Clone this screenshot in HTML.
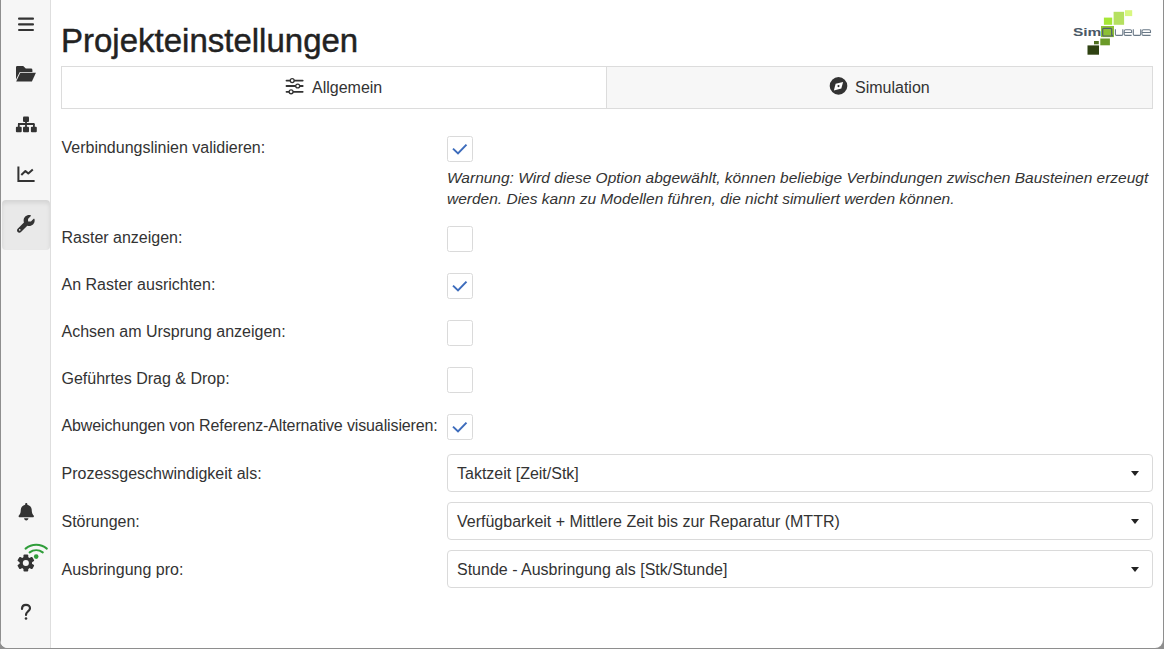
<!DOCTYPE html>
<html><head><meta charset="utf-8">
<style>
html,body{margin:0;padding:0;width:1164px;height:649px;overflow:hidden;background:#8e8e8e;font-family:"Liberation Sans",sans-serif;}
.abs{position:absolute;}
#win{position:absolute;left:0;top:0;width:1163px;height:648px;background:#fff;border-radius:0 0 8px 8px;overflow:hidden;}
#side{position:absolute;left:0;top:0;width:50px;height:648px;background:#f6f6f6;border-right:1px solid #dedede;}
#edge{position:absolute;left:0;top:0;width:1px;height:648px;background:#8e8e8e;}
.act{position:absolute;left:1.5px;top:200px;width:48.5px;height:49.5px;background:#e9e9e9;border-radius:4px;box-shadow:inset 0 3px 4px rgba(0,0,0,0.09);}
.t{position:absolute;white-space:nowrap;line-height:20px;}
.lbl{font-size:16px;color:#333;left:61.5px;}
.cb{position:absolute;left:447px;width:24px;height:24px;border:1px solid #dadada;border-radius:2.5px;background:#fff;}
.sel{position:absolute;left:447px;width:704px;height:36px;border:1px solid #dadada;border-radius:4px;background:#fff;}
.sel span{position:absolute;left:9px;top:9px;font-size:16px;color:#333;line-height:20px;white-space:nowrap;}
.caret{position:absolute;left:683px;top:16px;width:0;height:0;border-left:4.5px solid transparent;border-right:4.5px solid transparent;border-top:5px solid #222;}
</style></head><body>
<div id="win">
  <div id="side"><div class="act"></div></div>
  <div id="edge"></div>
  <svg class="abs" style="left:0;top:0" width="50" height="649" viewBox="0 0 50 649">
    <g fill="#333">
      <!-- hamburger -->
      <rect x="18" y="17.6" width="16" height="2.1" rx="1"/>
      <rect x="18" y="23.3" width="16" height="2.1" rx="1"/>
      <rect x="18" y="29" width="16" height="2.1" rx="1"/>
      <!-- folder open -->
      <path d="M16,67.3 Q16,66 17.3,66 H23.2 L25.8,68.6 H31 Q32.4,68.6 32.4,70 V71.9 H19.8 L16,79.5 Z"/>
      <path d="M20.3,72.8 H35.9 L31.9,81.6 H16.2 Z"/>
      <!-- sitemap -->
      <rect x="23" y="116.4" width="6" height="5.5" rx="1"/>
      <rect x="25.1" y="121" width="1.8" height="3"/>
      <rect x="18" y="123" width="16.5" height="2"/>
      <rect x="17.9" y="124" width="1.8" height="3"/>
      <rect x="33" y="124" width="1.8" height="3"/>
      <rect x="25.1" y="124" width="1.8" height="3"/>
      <rect x="15.9" y="126.7" width="5.8" height="5.5" rx="1"/>
      <rect x="23" y="126.7" width="6" height="5.5" rx="1"/>
      <rect x="30.9" y="126.7" width="5.9" height="5.5" rx="1"/>
      <!-- bell (FA5) -->
      <g transform="translate(18.6,503) scale(0.0342)">
        <path d="M224 512c35.32 0 63.97-28.65 63.97-64H160.03c0 35.35 28.65 64 63.97 64zm215.39-149.71c-19.32-20.76-55.470-51.99-55.47-154.29 0-77.7-54.48-139.9-127.94-155.16V32c0-17.67-14.32-32-31.98-32s-31.98 14.330-31.98 32v20.84C118.56 68.1 64.08 130.3 64.08 208c0 102.3-36.15 133.53-55.47 154.29-6 6.45-8.66 14.16-8.61 21.71.11 16.4 12.98 32 32.1 32h383.8c19.12 0 32-15.6 32.1-32 .05-7.55-2.61-15.27-8.61-21.71z"/>
      </g>
      <!-- wrench (FA6) -->
      <g transform="translate(17,215) scale(0.0345)">
        <path d="M352 320c88.4 0 160-71.6 160-160c0-15.3-2.2-30.1-6.2-44.2c-3.1-10.8-16.4-13.2-24.3-5.3l-76.8 76.8c-3 3-7.1 4.7-11.3 4.7H336c-8.8 0-16-7.2-16-16V118.6c0-4.2 1.7-8.3 4.7-11.3l76.8-76.8c7.9-7.9 5.4-21.2-5.3-24.3C382.1 2.2 367.3 0 352 0C263.6 0 192 71.6 192 160c0 19.1 3.4 37.5 9.5 54.5L19.9 396.1C7.2 408.8 0 426.1 0 444.1C0 481.6 30.4 512 67.9 512c18 0 35.3-7.2 48-19.9L297.5 310.5c17 6.2 35.4 9.5 54.5 9.5zM80 408a24 24 0 1 1 0 48 24 24 0 1 1 0-48z"/>
      </g>
    </g>
    <!-- chart line -->
    <g fill="none" stroke="#333" stroke-width="2">
      <path d="M18.4,166.5 V181 H34.6"/>
      <path d="M21.3,175 L25.4,171 L28.3,173.5 L32.8,169.6" stroke-linejoin="round"/>
    </g>
    <!-- gear -->
    <g id="gear" fill="#333">
      <circle cx="25.85" cy="563" r="6.3"/>
      <g transform="translate(25.85,563)">
        <rect x="-2.4" y="-8.6" width="4.8" height="4.5" rx="1"/>
        <rect x="-2.4" y="-8.6" width="4.8" height="4.5" rx="1" transform="rotate(60)"/>
        <rect x="-2.4" y="-8.6" width="4.8" height="4.5" rx="1" transform="rotate(120)"/>
        <rect x="-2.4" y="-8.6" width="4.8" height="4.5" rx="1" transform="rotate(180)"/>
        <rect x="-2.4" y="-8.6" width="4.8" height="4.5" rx="1" transform="rotate(240)"/>
        <rect x="-2.4" y="-8.6" width="4.8" height="4.5" rx="1" transform="rotate(300)"/>
      </g>
      <circle cx="25.85" cy="563" r="3.05" fill="#f6f6f6"/>
    </g>
    <g fill="none" stroke="#2f9d3a" stroke-width="2.1" stroke-linecap="round">
      <path d="M25.6,548.6 A16.5,16.5 0 0 1 46.8,548.6"/>
      <path d="M29.65,552.4 A10.9,10.9 0 0 1 42.75,552.4"/>
    </g>
    <circle cx="36.2" cy="556.6" r="2.3" fill="#2f9d3a"/>
    <!-- question -->
    <g fill="none" stroke="#333" stroke-width="2.2" stroke-linecap="round">
      <path d="M22,609 C22,606 23.8,604.8 26,604.8 C28.4,604.8 30,606.4 30,608.3 C30,610.3 28.5,611 27.4,612 C26.4,612.8 26,613.5 26,615"/>
    </g>
    <circle cx="26" cy="618.5" r="1.3" fill="#333"/>
  </svg>

  <!-- title -->
  <div class="t" style="left:61px;top:21px;font-size:33px;line-height:40px;color:#222;-webkit-text-stroke:0.45px #222;">Projekteinstellungen</div>
  <!-- logo placeholder -->
  <svg class="abs" style="left:1080px;top:5px" width="80" height="55" viewBox="1080 5 80 55">
    <rect x="1125" y="10.2" width="7.2" height="5.9" fill="#d8f780"/>
    <rect x="1113.6" y="11.8" width="10.5" height="13" fill="#b5e060"/>
    <rect x="1103.9" y="17.6" width="8.3" height="7.2" fill="#a6e636"/>
    <rect x="1101" y="26" width="13" height="11.1" fill="#8cc034"/>
    <rect x="1100.3" y="38.5" width="9.6" height="6.8" fill="#6a9a28"/>
    <rect x="1094" y="41" width="4.8" height="3.3" fill="#4d6e1e"/>
    <rect x="1087.5" y="45.4" width="11.5" height="9.3" fill="#2f4212"/>
    <path d="M1113,36 H1103.6 Q1102.7,36 1102.7,35 V29.3 Q1102.7,28.3 1103.6,28.3 H1110.6 Q1111.7,28.3 1111.7,29.3 V34.7 L1112.9,36" fill="none" stroke="#505e6b" stroke-width="1.2"/>
    <g fill="none" stroke="#6b7a88" stroke-width="1.1">
      <path d="M1115.4,29.3 V34.2 Q1115.4,35.4 1116.6,35.4 H1121.6 Q1122.8,35.4 1122.8,34.2 V29.3"/>
      <path d="M1133.3,29.3 V34.2 Q1133.3,35.4 1134.5,35.4 H1139.5 Q1140.7,35.4 1140.7,34.2 V29.3"/>
      <path d="M1131.6,35.4 H1125.6 Q1124.2,35.4 1124.2,34 V31 Q1124.2,29.8 1125.6,29.8 H1130.3 Q1131.6,29.8 1131.6,31 V32.5 H1124.2"/>
      <path d="M1150.6,35.4 H1143.4 Q1142,35.4 1142,34 V31 Q1142,29.8 1143.4,29.8 H1149.2 Q1150.5,29.8 1150.5,31 V32.5 H1142"/>
    </g>
  </svg>
  <div class="abs" style="left:1072.5px;top:25px;font-size:11.3px;line-height:14px;font-weight:bold;color:#4a5866;transform-origin:0 0;transform:scaleX(1.37);white-space:nowrap;">Sim</div>
  <!-- tabs -->
  <div class="abs" style="left:61px;top:66px;width:1090px;height:41px;border:1px solid #dcdcdc;background:#fff;"></div>
  <div class="abs" style="left:606px;top:66px;width:545px;height:41px;border:1px solid #dcdcdc;background:#f7f7f7;"></div>
  <svg class="abs" style="left:280px;top:74px" width="30" height="24" viewBox="280 74 30 24">
    <g stroke="#333" stroke-width="1.8" fill="none" stroke-linecap="round">
      <path d="M286.5,80.6 H302.7 M286.5,86.0 H302.7 M286.5,91.8 H302.7"/>
    </g>
    <g stroke="#333" stroke-width="1.3" fill="#fff">
      <circle cx="292.2" cy="80.6" r="1.95"/>
      <circle cx="297.7" cy="86.0" r="1.95"/>
      <circle cx="291.1" cy="91.8" r="1.95"/>
    </g>
  </svg>
  <div class="t" style="left:312px;top:78px;font-size:16px;color:#333;">Allgemein</div>
  <svg class="abs" style="left:826px;top:74px" width="24" height="24" viewBox="826 74 24 24">
    <circle cx="838.5" cy="85.9" r="8.8" fill="#333"/>
    <path d="M843.1,81.9 L841.3,88.6 L833.9,90.6 L835.6,83.8 Z" fill="#fff"/>
    <circle cx="838.5" cy="86.1" r="1.05" fill="#333"/>
  </svg>
  <div class="t" style="left:855px;top:78px;font-size:16px;color:#333;">Simulation</div>

  <!-- rows -->
  <div class="t lbl" style="top:138px;">Verbindungslinien validieren:</div>
  <div class="cb" style="top:136px;"></div>
  <div class="t" style="left:447px;top:167px;font-size:15.5px;line-height:21px;color:#333;font-style:italic;">Warnung: Wird diese Option abgewählt, können beliebige Verbindungen zwischen Bausteinen erzeugt<br>werden. Dies kann zu Modellen führen, die nicht simuliert werden können.</div>

  <div class="t lbl" style="top:228px;">Raster anzeigen:</div>
  <div class="cb" style="top:226px;"></div>
  <div class="t lbl" style="top:275px;">An Raster ausrichten:</div>
  <div class="cb" style="top:273px;"></div>
  <div class="t lbl" style="top:322px;">Achsen am Ursprung anzeigen:</div>
  <div class="cb" style="top:320px;"></div>
  <div class="t lbl" style="top:369px;">Geführtes Drag &amp; Drop:</div>
  <div class="cb" style="top:367px;"></div>
  <div class="t lbl" style="top:416px;letter-spacing:-0.12px;">Abweichungen von Referenz-Alternative visualisieren:</div>
  <div class="cb" style="top:414px;"></div>

  <svg class="abs" style="left:440px;top:130px" width="40" height="310" viewBox="440 130 40 310">
    <g fill="none" stroke="#3d6cbc" stroke-width="2" stroke-linejoin="miter">
      <polyline points="453,148.6 458,153.4 466.5,144.6"/>
      <polyline points="453,285.6 458,290.4 466.5,281.6"/>
      <polyline points="453,426.6 458,431.4 466.5,422.6"/>
    </g>
  </svg>

  <div class="t lbl" style="top:464px;">Prozessgeschwindigkeit als:</div>
  <div class="sel" style="top:454px;"><span>Taktzeit [Zeit/Stk]</span><div class="caret"></div></div>
  <div class="t lbl" style="top:512px;">Störungen:</div>
  <div class="sel" style="top:502px;"><span>Verfügbarkeit + Mittlere Zeit bis zur Reparatur (MTTR)</span><div class="caret"></div></div>
  <div class="t lbl" style="top:560px;">Ausbringung pro:</div>
  <div class="sel" style="top:550px;"><span>Stunde - Ausbringung als [Stk/Stunde]</span><div class="caret"></div></div>
</div>
</body></html>
